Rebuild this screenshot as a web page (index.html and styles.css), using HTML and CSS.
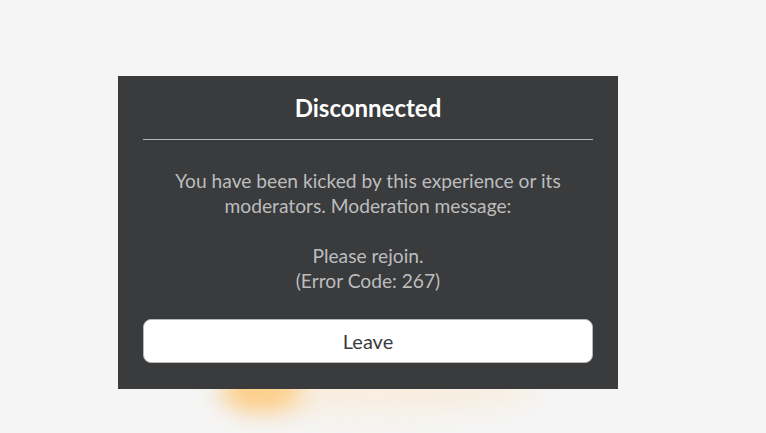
FILE: index.html
```html
<!DOCTYPE html>
<html lang="en">
<head>
<meta charset="utf-8">
<title>Disconnected</title>
<link rel="stylesheet" href="styles.css">
</head>
<body>
<div class="scene">
  <div class="glow glow-core"></div>
  <div class="glow glow-wide"></div>
  <section class="dialog">
    <header class="dialog-header">
      <h1 class="dialog-title">Disconnected</h1>
    </header>
    <p class="dialog-message">You have been kicked by this experience or its moderators. Moderation message:<br><br>Please rejoin.<br>(Error Code: 267)</p>
    <button class="leave-button" type="button">Leave</button>
  </section>
</div>
</body>
</html>
```
FILE: styles.css
```css
html, body {
  margin: 0;
  height: 100%;
  background: #f5f5f5;
  overflow: hidden;
}

.scene {
  position: relative;
  padding: 76px 0 0 118px;
  font-family: "Source Sans Pro", "Lato", "Noto Sans", sans-serif;
}

/* blurred game light bleeding out from behind the dialog */
.glow {
  position: absolute;
  border-radius: 50%;
  filter: blur(12px);
}

.glow-core {
  left: 222px;
  top: 372px;
  width: 80px;
  height: 38px;
  background: rgba(255, 186, 80, 0.8);
}

.glow-wide {
  left: 215px;
  top: 364px;
  width: 320px;
  height: 50px;
  background: rgba(255, 222, 175, 0.3);
}

.dialog {
  position: relative;
  width: 500px;
  box-sizing: border-box;
  padding: 0 25px 26px;
  background: #393b3d;
  display: flex;
  flex-direction: column;
}

.dialog-header {
  height: 63px;
  border-bottom: 1px solid #b8b8b8;
  display: flex;
  align-items: center;
  justify-content: center;
}

.dialog-title {
  margin: 0;
  color: #ffffff;
  font-size: 24px;
  font-weight: 700;
}

.dialog-message {
  margin: 28px 0 26px;
  color: #bdbdbd;
  font-size: 19.2px;
  line-height: 25px;
  text-align: center;
}

.leave-button {
  height: 44px;
  border: 1px solid #b8b8b8;
  border-radius: 8px;
  background: #ffffff;
  color: #393b3d;
  font-family: inherit;
  font-size: 20px;
  cursor: pointer;
}
```
